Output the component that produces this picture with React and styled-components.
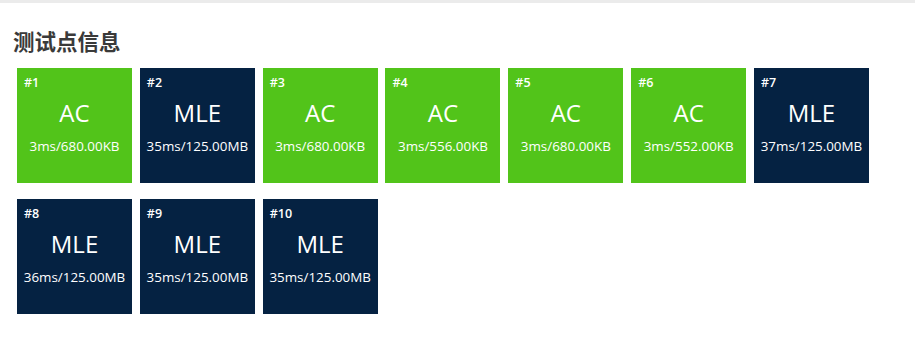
import React from 'react';
import styled, { createGlobalStyle } from 'styled-components';

const GlobalStyle = createGlobalStyle`
  body {
    margin: 0;
    background: #fff;
    font-family: "Open Sans", "Noto Sans CJK SC", sans-serif;
  }
`;

const TopBar = styled.div`
  height: 3px;
  background: #ebebeb;
`;

const Section = styled.div`
  padding: 22px 13px 0 13px;
`;

const Title = styled.h3`
  margin: 0 0 11px 0;
  font-size: 21.5px;
  line-height: 32px;
  font-weight: 700;
  color: #3a3a3a;
  font-family: "Noto Sans CJK SC", "Open Sans", sans-serif;
`;

const Grid = styled.div`
  display: flex;
  flex-wrap: wrap;
  gap: 16px 7.83px;
  padding-left: 4px;
  width: 880px;
`;

const Card = styled.div`
  width: 115px;
  height: 115px;
  box-sizing: border-box;
  padding: 6px 7px;
  display: flex;
  flex-direction: column;
  color: #fff;
  background: ${(p) => (p.status === 'AC' ? '#52c41a' : '#052242')};
`;

const CaseNo = styled.div`
  font-size: 12.5px;
  line-height: 18px;
  font-weight: 600;
`;

const Verdict = styled.div`
  text-align: center;
  font-size: 24px;
  line-height: 32px;
  margin-top: 5px;
`;

const Usage = styled.div`
  text-align: center;
  font-size: 13.4px;
  line-height: 18px;
  margin-top: 8px;
  white-space: nowrap;
  margin-left: -7px;
  margin-right: -7px;
`;

const cases = [
  { status: 'AC', time: '3ms', mem: '680.00KB' },
  { status: 'MLE', time: '35ms', mem: '125.00MB' },
  { status: 'AC', time: '3ms', mem: '680.00KB' },
  { status: 'AC', time: '3ms', mem: '556.00KB' },
  { status: 'AC', time: '3ms', mem: '680.00KB' },
  { status: 'AC', time: '3ms', mem: '552.00KB' },
  { status: 'MLE', time: '37ms', mem: '125.00MB' },
  { status: 'MLE', time: '36ms', mem: '125.00MB' },
  { status: 'MLE', time: '35ms', mem: '125.00MB' },
  { status: 'MLE', time: '35ms', mem: '125.00MB' },
];

export default function App() {
  return (
    <>
      <GlobalStyle />
      <TopBar />
      <Section>
        <Title>测试点信息</Title>
        <Grid>
          {cases.map((c, i) => (
            <Card key={i} status={c.status}>
              <CaseNo>#{i + 1}</CaseNo>
              <Verdict>{c.status}</Verdict>
              <Usage>
                {c.time}/{c.mem}
              </Usage>
            </Card>
          ))}
        </Grid>
      </Section>
    </>
  );
}
